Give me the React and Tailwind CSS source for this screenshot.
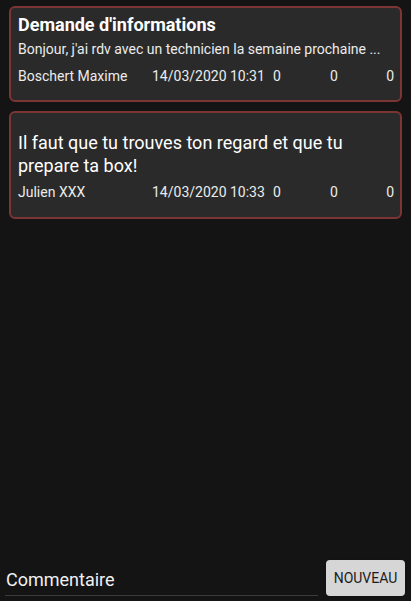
import React from 'react';

const posts = [
  {
    title: "Demande d'informations",
    body: "Bonjour, j'ai rdv avec un technicien la semaine prochaine ...",
    author: 'Boschert Maxime',
    date: '14/03/2020 10:31',
  },
  {
    title: '',
    body: 'Il faut que tu trouves ton regard et que tu prepare ta box!',
    author: 'Julien XXX',
    date: '14/03/2020 10:33',
  },
];

const Footer = ({ author, date }) => (
  <div className="flex items-center text-[14px] leading-[20px] text-[#ececec]">
    <span className="w-[134px]">{author}</span>
    <span className="w-[121px]">{date}</span>
    <span className="w-[57px]">0</span>
    <span className="flex-1">0</span>
    <span>0</span>
  </div>
);

const App = () => {
  return (
    <div
      className="h-[601px] w-[411px] bg-[#141414] flex flex-col overflow-hidden"
      style={{ fontFamily: 'Roboto, "Noto Sans", sans-serif' }}
    >
      {/* Posts */}
      <div className="flex flex-col gap-[9px] pt-[6px] px-[9px]">
        {posts.map((p, i) =>
          p.title ? (
            <div key={i} className="border-2 border-[#7c3535] rounded-md bg-[#2a2a2a] pl-[7px] pr-[6px] pt-[6px] pb-[14px]">
              <div className="text-[18px] font-bold leading-[22px] text-white">{p.title}</div>
              <div className="mt-[3px] text-[14px] leading-[20px] text-[#ececec] whitespace-nowrap overflow-hidden">{p.body}</div>
              <div className="mt-[7px]">
                <Footer author={p.author} date={p.date} />
              </div>
            </div>
          ) : (
            <div key={i} className="border-2 border-[#7c3535] rounded-md bg-[#2a2a2a] pl-[7px] pr-[6px] pt-[18px] pb-[15px]">
              <div className="text-[18px] leading-[23px] text-white pr-[40px]">{p.body}</div>
              <div className="mt-[5px]">
                <Footer author={p.author} date={p.date} />
              </div>
            </div>
          )
        )}
      </div>

      <div className="flex-1" />

      {/* Comment bar */}
      <div className="flex items-end pl-[5px] pr-[6px] pb-[5px]">
        <div className="w-[313px] border-b border-[#3c3c3c] pb-[2px]">
          <span className="pl-[1px] text-[18px] leading-[24px] text-[#f0f0f0]">Commentaire</span>
        </div>
        <div className="flex-1" />
        <button className="w-[79px] h-[36px] rounded-sm bg-[#d6d6d6] text-[14px] font-normal text-[#1c1c1c] shadow">
          NOUVEAU
        </button>
      </div>
    </div>
  );
};

export default App;
